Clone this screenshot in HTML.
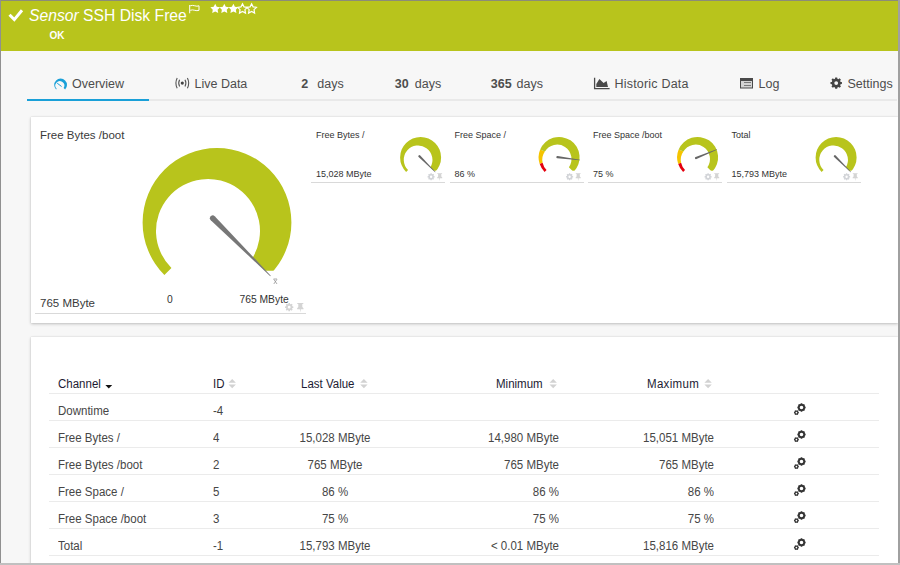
<!DOCTYPE html><html><head><meta charset="utf-8"><style>
*{margin:0;padding:0;box-sizing:border-box}
html,body{width:900px;height:565px;overflow:hidden}
body{font-family:"Liberation Sans",sans-serif;background:#f7f7f7;position:relative;color:#4a4a4a}
.a{position:absolute;white-space:nowrap;line-height:1}
#hdr{position:absolute;left:1px;top:1px;width:897px;height:50px;background:#b8c41c}
.title{color:#fff;font-size:15.7px}
.ok{color:#fff;font-size:10px;font-weight:bold}
.tab{font-size:12.5px;color:#4d4d4d}
.panel{position:absolute;background:#fff;box-shadow:0 1px 3px rgba(0,0,0,0.22),0 0 1px rgba(0,0,0,0.14)}
.gt{font-size:11.5px;color:#3a3a3a}
.st{font-size:9px;color:#333}
.ln{position:absolute;height:1px;background:#d9d9d9}
.th{font-size:12.5px;color:#1c1b33;transform:scaleX(0.92);transform-origin:0 0}
.td{font-size:12.5px;color:#464646;transform:scaleX(0.92);transform-origin:0 0}
.rl{position:absolute;left:49px;width:830px;height:1px;background:#ebebeb}
svg.full{position:absolute;left:0;top:0}
</style></head><body>
<div id="hdr"></div>
<div class="a title" style="left:29px;top:8px"><i>Sensor</i> SSH Disk Free</div>
<div class="a ok" style="left:49.5px;top:30.5px">OK</div>
<div class="a tab" style="left:72px;top:78px">Overview</div>
<div class="a tab" style="left:194.5px;top:78px">Live Data</div>
<div class="a tab" style="left:301.2px;top:78px"><b>2</b></div>
<div class="a tab" style="left:317.3px;top:78px">days</div>
<div class="a tab" style="left:394.8px;top:78px"><b>30</b></div>
<div class="a tab" style="left:414.8px;top:78px">days</div>
<div class="a tab" style="left:490.8px;top:78px"><b>365</b></div>
<div class="a tab" style="left:516.6px;top:78px">days</div>
<div class="a tab" style="left:614.5px;top:78px"><span style="letter-spacing:0.2px">Historic Data</span></div>
<div class="a tab" style="left:758.5px;top:78px">Log</div>
<div class="a tab" style="left:847.5px;top:78px">Settings</div>
<div style="position:absolute;left:27px;top:99px;width:870px;height:2px;background:#e9e9e9"></div>
<div style="position:absolute;left:27px;top:99px;width:122px;height:2px;background:#1aa0d8"></div>
<div class="panel" style="left:31px;top:117px;width:867px;height:206px"></div>
<div class="panel" style="left:31px;top:337px;width:867px;height:240px"></div>
<div class="a gt" style="left:40px;top:130px">Free Bytes /boot</div>
<div class="a gt" style="left:40px;top:298px">765 MByte</div>
<div class="ln" style="left:35px;top:313px;width:271px"></div>
<div class="a" style="left:167px;top:294.5px;font-size:10.3px;color:#333">0</div>
<div class="a" style="left:239.5px;top:294.5px;font-size:10.3px;color:#333">765 MByte</div>
<div class="a st" style="left:316.0px;top:131px">Free Bytes /</div>
<div class="a st" style="left:316.0px;top:169.5px">15,028 MByte</div>
<div class="ln" style="left:311.0px;top:182px;width:134px"></div>
<div class="a st" style="left:454.5px;top:131px">Free Space /</div>
<div class="a st" style="left:454.5px;top:169.5px">86 %</div>
<div class="ln" style="left:449.5px;top:182px;width:134px"></div>
<div class="a st" style="left:593.0px;top:131px">Free Space /boot</div>
<div class="a st" style="left:593.0px;top:169.5px">75 %</div>
<div class="ln" style="left:588.0px;top:182px;width:134px"></div>
<div class="a st" style="left:731.5px;top:131px">Total</div>
<div class="a st" style="left:731.5px;top:169.5px">15,793 MByte</div>
<div class="ln" style="left:726.5px;top:182px;width:134px"></div>
<div class="a th" style="left:58px;top:378px">Channel</div>
<div class="a th" style="left:213px;top:378px">ID</div>
<div class="a th" style="left:301px;top:378px">Last Value</div>
<div class="a th" style="left:495.5px;top:378px">Minimum</div>
<div class="a th" style="left:647px;top:378px"><span style="letter-spacing:0.35px">Maximum</span></div>
<div class="rl" style="top:393px"></div>
<div class="rl" style="top:420px"></div>
<div class="rl" style="top:447px"></div>
<div class="rl" style="top:474px"></div>
<div class="rl" style="top:501px"></div>
<div class="rl" style="top:528px"></div>
<div class="rl" style="top:555px"></div>
<div class="a td" style="left:58px;top:405px">Downtime</div>
<div class="a td" style="left:213px;top:405px">-4</div>
<div class="a td" style="left:58px;top:432px">Free Bytes /</div>
<div class="a td" style="left:213px;top:432px">4</div>
<div class="a td" style="left:235.3px;width:200px;text-align:center;transform-origin:50% 0;top:432px">15,028 MByte</div>
<div class="a td" style="left:358.8px;width:200px;text-align:right;transform-origin:100% 0;top:432px">14,980 MByte</div>
<div class="a td" style="left:514.3px;width:200px;text-align:right;transform-origin:100% 0;top:432px">15,051 MByte</div>
<div class="a td" style="left:58px;top:459px">Free Bytes /boot</div>
<div class="a td" style="left:213px;top:459px">2</div>
<div class="a td" style="left:235.3px;width:200px;text-align:center;transform-origin:50% 0;top:459px">765 MByte</div>
<div class="a td" style="left:358.8px;width:200px;text-align:right;transform-origin:100% 0;top:459px">765 MByte</div>
<div class="a td" style="left:514.3px;width:200px;text-align:right;transform-origin:100% 0;top:459px">765 MByte</div>
<div class="a td" style="left:58px;top:486px">Free Space /</div>
<div class="a td" style="left:213px;top:486px">5</div>
<div class="a td" style="left:235.3px;width:200px;text-align:center;transform-origin:50% 0;top:486px">86 %</div>
<div class="a td" style="left:358.8px;width:200px;text-align:right;transform-origin:100% 0;top:486px">86 %</div>
<div class="a td" style="left:514.3px;width:200px;text-align:right;transform-origin:100% 0;top:486px">86 %</div>
<div class="a td" style="left:58px;top:513px">Free Space /boot</div>
<div class="a td" style="left:213px;top:513px">3</div>
<div class="a td" style="left:235.3px;width:200px;text-align:center;transform-origin:50% 0;top:513px">75 %</div>
<div class="a td" style="left:358.8px;width:200px;text-align:right;transform-origin:100% 0;top:513px">75 %</div>
<div class="a td" style="left:514.3px;width:200px;text-align:right;transform-origin:100% 0;top:513px">75 %</div>
<div class="a td" style="left:58px;top:540px">Total</div>
<div class="a td" style="left:213px;top:540px">-1</div>
<div class="a td" style="left:235.3px;width:200px;text-align:center;transform-origin:50% 0;top:540px">15,793 MByte</div>
<div class="a td" style="left:358.8px;width:200px;text-align:right;transform-origin:100% 0;top:540px">< 0.01 MByte</div>
<div class="a td" style="left:514.3px;width:200px;text-align:right;transform-origin:100% 0;top:540px">15,816 MByte</div>
<svg class="full" width="900" height="565" viewBox="0 0 900 565">
<path d="M9.5 14.8 L14.3 19.6 L22 10.3" stroke="#fff" stroke-width="3" fill="none" stroke-linecap="butt"/>
<path d="M189.7 5 V13.3" stroke="#fff" stroke-width="1"/>
<path d="M190.2 5.8 Q192.5 5 194.8 5.8 Q197 6.6 199 5.8 V10.3 Q197 11.1 194.8 10.3 Q192.5 9.5 190.2 10.3" fill="none" stroke="#fff" stroke-width="1"/>
<path d="M215.20 3.80 L216.70 6.84 L220.05 7.32 L217.63 9.69 L218.20 13.03 L215.20 11.45 L212.20 13.03 L212.77 9.69 L210.35 7.32 L213.70 6.84 Z" fill="#fff"/>
<path d="M224.30 3.80 L225.80 6.84 L229.15 7.32 L226.73 9.69 L227.30 13.03 L224.30 11.45 L221.30 13.03 L221.87 9.69 L219.45 7.32 L222.80 6.84 Z" fill="#fff"/>
<path d="M233.40 3.80 L234.90 6.84 L238.25 7.32 L235.83 9.69 L236.40 13.03 L233.40 11.45 L230.40 13.03 L230.97 9.69 L228.55 7.32 L231.90 6.84 Z" fill="#fff"/>
<path d="M242.50 3.80 L244.00 6.84 L247.35 7.32 L244.93 9.69 L245.50 13.03 L242.50 11.45 L239.50 13.03 L240.07 9.69 L237.65 7.32 L241.00 6.84 Z" fill="none" stroke="#fff" stroke-width="1.2"/>
<path d="M251.60 3.80 L253.10 6.84 L256.45 7.32 L254.03 9.69 L254.60 13.03 L251.60 11.45 L248.60 13.03 L249.17 9.69 L246.75 7.32 L250.10 6.84 Z" fill="none" stroke="#fff" stroke-width="1.2"/>
<g transform="translate(60.6 84.9) scale(0.086)"><path d="M-52.61 52.61 A74.4 74.4 0 1 1 52.61 52.61 L35.50 35.50 A52.0 52.0 0 1 0 -45.57 45.57 Z" fill="#1aa0d8"/></g>
<path d="M57.2 83.2 L61.6 86.5" stroke="#1aa0d8" stroke-width="1"/>
<circle cx="182.3" cy="83.1" r="1.6" fill="#444"/>
<path d="M179.6 79.8 Q177.8 83.1 179.6 86.4 M185 79.8 Q186.8 83.1 185 86.4" stroke="#555" stroke-width="1.1" fill="none"/>
<path d="M177.2 78 Q174.6 83.1 177.2 88.2 M187.4 78 Q190 83.1 187.4 88.2" stroke="#555" stroke-width="1.1" fill="none"/>
<path d="M594.6 77.8 V88.6 H609.6" stroke="#4a4a4a" stroke-width="1.3" fill="none"/>
<path d="M596.3 86.9 L596.3 84 L599.4 79.1 L603.6 83 L606.6 80.9 L608 86.9 Z" fill="#4a4a4a"/>
<rect x="740" y="78" width="13" height="10.5" fill="#4a4a4a"/>
<rect x="741" y="81" width="11" height="6.5" fill="#d4d4d4"/>
<path d="M744 82.5 H751 M744 85.5 H751" stroke="#7a7a7a" stroke-width="1"/>
<path d="M840.56 81.89 L841.91 82.10 L841.91 84.10 L840.56 84.31 L840.14 85.33 L840.95 86.44 L839.54 87.85 L838.43 87.04 L837.41 87.46 L837.20 88.81 L835.20 88.81 L834.99 87.46 L833.97 87.04 L832.86 87.85 L831.45 86.44 L832.26 85.33 L831.84 84.31 L830.49 84.10 L830.49 82.10 L831.84 81.89 L832.26 80.87 L831.45 79.76 L832.86 78.35 L833.97 79.16 L834.99 78.74 L835.20 77.39 L837.20 77.39 L837.41 78.74 L838.43 79.16 L839.54 78.35 L840.95 79.76 L840.14 80.87 Z M834.30 83.10 a1.90 1.90 0 1 0 3.80 0 a1.90 1.90 0 1 0 -3.80 0 Z" fill="#444" fill-rule="evenodd"/>
<g transform="translate(217.00 222.40) scale(1.0000)"><path d="M-52.61 52.61 A74.4 74.4 0 1 1 52.61 52.61 L35.50 35.50 A52.0 52.0 0 1 0 -45.57 45.57 Z" fill="#b8c41c"/><path d="M0 48.3 H80 V55 H0 Z" fill="#fff"/><path d="M-6.22 -2.26 L53.28 53.78 L53.78 53.28 L-2.26 -6.22 A2.80 2.80 0 0 0 -6.22 -2.26 Z" fill="#777"/></g>
<path d="M273.5 279 H277 M273.8 279.3 L277 284 M277 279.3 L273.8 284" stroke="#888" stroke-width="0.7" fill="none"/>
<path d="M292.36 306.33 L293.34 306.48 L293.34 307.92 L292.36 308.07 L292.05 308.81 L292.64 309.62 L291.62 310.64 L290.81 310.05 L290.07 310.36 L289.92 311.34 L288.48 311.34 L288.33 310.36 L287.59 310.05 L286.78 310.64 L285.76 309.62 L286.35 308.81 L286.04 308.07 L285.06 307.92 L285.06 306.48 L286.04 306.33 L286.35 305.59 L285.76 304.78 L286.78 303.76 L287.59 304.35 L288.33 304.04 L288.48 303.06 L289.92 303.06 L290.07 304.04 L290.81 304.35 L291.62 303.76 L292.64 304.78 L292.05 305.59 Z M287.80 307.20 a1.40 1.40 0 1 0 2.80 0 a1.40 1.40 0 1 0 -2.80 0 Z" fill="#d4d4d4" fill-rule="evenodd"/>
<path d="M297.3 303.0 h6 v1 h-1 v3 l1.2 1.3 v0.9 h-2.7 l-0.5 3.3 l-0.5 -3.3 h-2.7 v-0.9 l1.2 -1.3 v-3 h-1 Z" fill="#d4d4d4"/>
<g transform="translate(420.60 157.40) scale(0.2755)"><path d="M-52.61 52.61 A74.4 74.4 0 1 1 52.61 52.61 L35.50 35.50 A52.0 52.0 0 1 0 -45.57 45.57 Z" fill="#b8c41c"/><path d="M0 48.3 H80 V55 H0 Z" fill="#fff"/><path d="M-7.21 -1.27 L52.82 54.24 L54.24 52.82 L-1.27 -7.21 A4.20 4.20 0 0 0 -7.21 -1.27 Z" fill="#666"/></g>
<path d="M433.81 176.05 L434.65 176.18 L434.65 177.42 L433.81 177.55 L433.54 178.18 L434.05 178.87 L433.17 179.75 L432.48 179.24 L431.85 179.51 L431.72 180.35 L430.48 180.35 L430.35 179.51 L429.72 179.24 L429.03 179.75 L428.15 178.87 L428.66 178.18 L428.39 177.55 L427.55 177.42 L427.55 176.18 L428.39 176.05 L428.66 175.42 L428.15 174.73 L429.03 173.85 L429.72 174.36 L430.35 174.09 L430.48 173.25 L431.72 173.25 L431.85 174.09 L432.48 174.36 L433.17 173.85 L434.05 174.73 L433.54 175.42 Z M429.90 176.80 a1.20 1.20 0 1 0 2.40 0 a1.20 1.20 0 1 0 -2.40 0 Z" fill="#d2d4d8" fill-rule="evenodd"/>
<g transform="translate(437.3 173.3) scale(0.8)"><path d="M0.0 0.0 h6 v1 h-1 v3 l1.2 1.3 v0.9 h-2.7 l-0.5 3.3 l-0.5 -3.3 h-2.7 v-0.9 l1.2 -1.3 v-3 h-1 Z" fill="#d4d4d4"/></g>
<g transform="translate(559.10 157.40) scale(0.2755)"><path d="M-52.61 52.61 A74.4 74.4 0 0 1 -70.76 22.99 L-59.86 19.45 A52.0 52.0 0 0 0 -45.57 45.57 Z" fill="#e4000f"/><path d="M-70.76 22.99 A74.4 74.4 0 0 1 -68.74 -28.47 L-51.52 -21.34 A52.0 52.0 0 0 0 -59.86 19.45 Z" fill="#f5c400"/><path d="M-68.74 -28.47 A74.4 74.4 0 1 1 52.61 52.61 L35.50 35.50 A52.0 52.0 0 1 0 -51.52 -21.34 Z" fill="#b8c41c"/><path d="M0 48.3 H80 V55 H0 Z" fill="#fff"/><path d="M-6.48 3.41 L74.98 10.48 L75.23 8.50 L-5.43 -4.92 A4.20 4.20 0 0 0 -6.48 3.41 Z" fill="#666"/></g>
<path d="M572.31 176.05 L573.15 176.18 L573.15 177.42 L572.31 177.55 L572.04 178.18 L572.55 178.87 L571.67 179.75 L570.98 179.24 L570.35 179.51 L570.22 180.35 L568.98 180.35 L568.85 179.51 L568.22 179.24 L567.53 179.75 L566.65 178.87 L567.16 178.18 L566.89 177.55 L566.05 177.42 L566.05 176.18 L566.89 176.05 L567.16 175.42 L566.65 174.73 L567.53 173.85 L568.22 174.36 L568.85 174.09 L568.98 173.25 L570.22 173.25 L570.35 174.09 L570.98 174.36 L571.67 173.85 L572.55 174.73 L572.04 175.42 Z M568.40 176.80 a1.20 1.20 0 1 0 2.40 0 a1.20 1.20 0 1 0 -2.40 0 Z" fill="#d2d4d8" fill-rule="evenodd"/>
<g transform="translate(575.8 173.3) scale(0.8)"><path d="M0.0 0.0 h6 v1 h-1 v3 l1.2 1.3 v0.9 h-2.7 l-0.5 3.3 l-0.5 -3.3 h-2.7 v-0.9 l1.2 -1.3 v-3 h-1 Z" fill="#d4d4d4"/></g>
<g transform="translate(697.60 157.40) scale(0.2755)"><path d="M-52.61 52.61 A74.4 74.4 0 0 1 -70.76 22.99 L-59.86 19.45 A52.0 52.0 0 0 0 -45.57 45.57 Z" fill="#e4000f"/><path d="M-70.76 22.99 A74.4 74.4 0 0 1 -68.74 -28.47 L-51.52 -21.34 A52.0 52.0 0 0 0 -59.86 19.45 Z" fill="#f5c400"/><path d="M-68.74 -28.47 A74.4 74.4 0 1 1 52.61 52.61 L35.50 35.50 A52.0 52.0 0 1 0 -51.52 -21.34 Z" fill="#b8c41c"/><path d="M0 48.3 H80 V55 H0 Z" fill="#fff"/><path d="M-3.94 6.18 L70.32 -28.05 L69.55 -29.89 L-7.15 -1.58 A4.20 4.20 0 0 0 -3.94 6.18 Z" fill="#666"/></g>
<path d="M710.81 176.05 L711.65 176.18 L711.65 177.42 L710.81 177.55 L710.54 178.18 L711.05 178.87 L710.17 179.75 L709.48 179.24 L708.85 179.51 L708.72 180.35 L707.48 180.35 L707.35 179.51 L706.72 179.24 L706.03 179.75 L705.15 178.87 L705.66 178.18 L705.39 177.55 L704.55 177.42 L704.55 176.18 L705.39 176.05 L705.66 175.42 L705.15 174.73 L706.03 173.85 L706.72 174.36 L707.35 174.09 L707.48 173.25 L708.72 173.25 L708.85 174.09 L709.48 174.36 L710.17 173.85 L711.05 174.73 L710.54 175.42 Z M706.90 176.80 a1.20 1.20 0 1 0 2.40 0 a1.20 1.20 0 1 0 -2.40 0 Z" fill="#d2d4d8" fill-rule="evenodd"/>
<g transform="translate(714.3 173.3) scale(0.8)"><path d="M0.0 0.0 h6 v1 h-1 v3 l1.2 1.3 v0.9 h-2.7 l-0.5 3.3 l-0.5 -3.3 h-2.7 v-0.9 l1.2 -1.3 v-3 h-1 Z" fill="#d4d4d4"/></g>
<g transform="translate(836.10 157.40) scale(0.2755)"><path d="M-52.61 52.61 A74.4 74.4 0 1 1 52.61 52.61 L35.50 35.50 A52.0 52.0 0 1 0 -45.57 45.57 Z" fill="#b8c41c"/><path d="M0 48.3 H80 V55 H0 Z" fill="#fff"/><path d="M-7.21 -1.27 L52.82 54.24 L54.24 52.82 L-1.27 -7.21 A4.20 4.20 0 0 0 -7.21 -1.27 Z" fill="#666"/></g>
<path d="M849.31 176.05 L850.15 176.18 L850.15 177.42 L849.31 177.55 L849.04 178.18 L849.55 178.87 L848.67 179.75 L847.98 179.24 L847.35 179.51 L847.22 180.35 L845.98 180.35 L845.85 179.51 L845.22 179.24 L844.53 179.75 L843.65 178.87 L844.16 178.18 L843.89 177.55 L843.05 177.42 L843.05 176.18 L843.89 176.05 L844.16 175.42 L843.65 174.73 L844.53 173.85 L845.22 174.36 L845.85 174.09 L845.98 173.25 L847.22 173.25 L847.35 174.09 L847.98 174.36 L848.67 173.85 L849.55 174.73 L849.04 175.42 Z M845.40 176.80 a1.20 1.20 0 1 0 2.40 0 a1.20 1.20 0 1 0 -2.40 0 Z" fill="#d2d4d8" fill-rule="evenodd"/>
<g transform="translate(852.8 173.3) scale(0.8)"><path d="M0.0 0.0 h6 v1 h-1 v3 l1.2 1.3 v0.9 h-2.7 l-0.5 3.3 l-0.5 -3.3 h-2.7 v-0.9 l1.2 -1.3 v-3 h-1 Z" fill="#d4d4d4"/></g>
<path d="M105.4 385 H112.2 L108.8 388.6 Z" fill="#111"/>
<path d="M228.5 382.8 L232.2 379.1 L235.9 382.8 Z M228.5 384.5 L232.2 388.3 L235.9 384.5 Z" fill="#d2d2d2"/>
<path d="M360.2 382.8 L363.9 379.1 L367.6 382.8 Z M360.2 384.5 L363.9 388.3 L367.6 384.5 Z" fill="#d2d2d2"/>
<path d="M549.5 382.8 L553.2 379.1 L556.9 382.8 Z M549.5 384.5 L553.2 388.3 L556.9 384.5 Z" fill="#d2d2d2"/>
<path d="M704.4 382.8 L708.1 379.1 L711.8 382.8 Z M704.4 384.5 L708.1 388.3 L711.8 384.5 Z" fill="#d2d2d2"/>
<path d="M805.06 406.51 L805.64 406.78 L805.64 408.22 L805.06 408.49 L804.72 409.32 L804.94 409.92 L803.92 410.94 L803.32 410.72 L802.49 411.06 L802.22 411.64 L800.78 411.64 L800.51 411.06 L799.68 410.72 L799.08 410.94 L798.06 409.92 L798.28 409.32 L797.94 408.49 L797.36 408.22 L797.36 406.78 L797.94 406.51 L798.28 405.68 L798.06 405.08 L799.08 404.06 L799.68 404.28 L800.51 403.94 L800.78 403.36 L802.22 403.36 L802.49 403.94 L803.32 404.28 L803.92 404.06 L804.94 405.08 L804.72 405.68 Z M799.70 407.50 a1.80 1.80 0 1 0 3.60 0 a1.80 1.80 0 1 0 -3.60 0 Z" fill="#333" fill-rule="evenodd"/>
<path d="M798.39 411.85 L798.83 412.03 L798.83 413.17 L798.39 413.35 L798.04 413.95 L798.11 414.42 L797.12 414.99 L796.75 414.70 L796.05 414.70 L795.68 414.99 L794.69 414.42 L794.76 413.95 L794.41 413.35 L793.97 413.17 L793.97 412.03 L794.41 411.85 L794.76 411.25 L794.69 410.78 L795.68 410.21 L796.05 410.50 L796.75 410.50 L797.12 410.21 L798.11 410.78 L798.04 411.25 Z M795.55 412.60 a0.85 0.85 0 1 0 1.70 0 a0.85 0.85 0 1 0 -1.70 0 Z" fill="#333" fill-rule="evenodd"/>
<path d="M805.06 433.51 L805.64 433.78 L805.64 435.22 L805.06 435.49 L804.72 436.32 L804.94 436.92 L803.92 437.94 L803.32 437.72 L802.49 438.06 L802.22 438.64 L800.78 438.64 L800.51 438.06 L799.68 437.72 L799.08 437.94 L798.06 436.92 L798.28 436.32 L797.94 435.49 L797.36 435.22 L797.36 433.78 L797.94 433.51 L798.28 432.68 L798.06 432.08 L799.08 431.06 L799.68 431.28 L800.51 430.94 L800.78 430.36 L802.22 430.36 L802.49 430.94 L803.32 431.28 L803.92 431.06 L804.94 432.08 L804.72 432.68 Z M799.70 434.50 a1.80 1.80 0 1 0 3.60 0 a1.80 1.80 0 1 0 -3.60 0 Z" fill="#333" fill-rule="evenodd"/>
<path d="M798.39 438.85 L798.83 439.03 L798.83 440.17 L798.39 440.35 L798.04 440.95 L798.11 441.42 L797.12 441.99 L796.75 441.70 L796.05 441.70 L795.68 441.99 L794.69 441.42 L794.76 440.95 L794.41 440.35 L793.97 440.17 L793.97 439.03 L794.41 438.85 L794.76 438.25 L794.69 437.78 L795.68 437.21 L796.05 437.50 L796.75 437.50 L797.12 437.21 L798.11 437.78 L798.04 438.25 Z M795.55 439.60 a0.85 0.85 0 1 0 1.70 0 a0.85 0.85 0 1 0 -1.70 0 Z" fill="#333" fill-rule="evenodd"/>
<path d="M805.06 460.51 L805.64 460.78 L805.64 462.22 L805.06 462.49 L804.72 463.32 L804.94 463.92 L803.92 464.94 L803.32 464.72 L802.49 465.06 L802.22 465.64 L800.78 465.64 L800.51 465.06 L799.68 464.72 L799.08 464.94 L798.06 463.92 L798.28 463.32 L797.94 462.49 L797.36 462.22 L797.36 460.78 L797.94 460.51 L798.28 459.68 L798.06 459.08 L799.08 458.06 L799.68 458.28 L800.51 457.94 L800.78 457.36 L802.22 457.36 L802.49 457.94 L803.32 458.28 L803.92 458.06 L804.94 459.08 L804.72 459.68 Z M799.70 461.50 a1.80 1.80 0 1 0 3.60 0 a1.80 1.80 0 1 0 -3.60 0 Z" fill="#333" fill-rule="evenodd"/>
<path d="M798.39 465.85 L798.83 466.03 L798.83 467.17 L798.39 467.35 L798.04 467.95 L798.11 468.42 L797.12 468.99 L796.75 468.70 L796.05 468.70 L795.68 468.99 L794.69 468.42 L794.76 467.95 L794.41 467.35 L793.97 467.17 L793.97 466.03 L794.41 465.85 L794.76 465.25 L794.69 464.78 L795.68 464.21 L796.05 464.50 L796.75 464.50 L797.12 464.21 L798.11 464.78 L798.04 465.25 Z M795.55 466.60 a0.85 0.85 0 1 0 1.70 0 a0.85 0.85 0 1 0 -1.70 0 Z" fill="#333" fill-rule="evenodd"/>
<path d="M805.06 487.51 L805.64 487.78 L805.64 489.22 L805.06 489.49 L804.72 490.32 L804.94 490.92 L803.92 491.94 L803.32 491.72 L802.49 492.06 L802.22 492.64 L800.78 492.64 L800.51 492.06 L799.68 491.72 L799.08 491.94 L798.06 490.92 L798.28 490.32 L797.94 489.49 L797.36 489.22 L797.36 487.78 L797.94 487.51 L798.28 486.68 L798.06 486.08 L799.08 485.06 L799.68 485.28 L800.51 484.94 L800.78 484.36 L802.22 484.36 L802.49 484.94 L803.32 485.28 L803.92 485.06 L804.94 486.08 L804.72 486.68 Z M799.70 488.50 a1.80 1.80 0 1 0 3.60 0 a1.80 1.80 0 1 0 -3.60 0 Z" fill="#333" fill-rule="evenodd"/>
<path d="M798.39 492.85 L798.83 493.03 L798.83 494.17 L798.39 494.35 L798.04 494.95 L798.11 495.42 L797.12 495.99 L796.75 495.70 L796.05 495.70 L795.68 495.99 L794.69 495.42 L794.76 494.95 L794.41 494.35 L793.97 494.17 L793.97 493.03 L794.41 492.85 L794.76 492.25 L794.69 491.78 L795.68 491.21 L796.05 491.50 L796.75 491.50 L797.12 491.21 L798.11 491.78 L798.04 492.25 Z M795.55 493.60 a0.85 0.85 0 1 0 1.70 0 a0.85 0.85 0 1 0 -1.70 0 Z" fill="#333" fill-rule="evenodd"/>
<path d="M805.06 514.51 L805.64 514.78 L805.64 516.22 L805.06 516.49 L804.72 517.32 L804.94 517.92 L803.92 518.94 L803.32 518.72 L802.49 519.06 L802.22 519.64 L800.78 519.64 L800.51 519.06 L799.68 518.72 L799.08 518.94 L798.06 517.92 L798.28 517.32 L797.94 516.49 L797.36 516.22 L797.36 514.78 L797.94 514.51 L798.28 513.68 L798.06 513.08 L799.08 512.06 L799.68 512.28 L800.51 511.94 L800.78 511.36 L802.22 511.36 L802.49 511.94 L803.32 512.28 L803.92 512.06 L804.94 513.08 L804.72 513.68 Z M799.70 515.50 a1.80 1.80 0 1 0 3.60 0 a1.80 1.80 0 1 0 -3.60 0 Z" fill="#333" fill-rule="evenodd"/>
<path d="M798.39 519.85 L798.83 520.03 L798.83 521.17 L798.39 521.35 L798.04 521.95 L798.11 522.42 L797.12 522.99 L796.75 522.70 L796.05 522.70 L795.68 522.99 L794.69 522.42 L794.76 521.95 L794.41 521.35 L793.97 521.17 L793.97 520.03 L794.41 519.85 L794.76 519.25 L794.69 518.78 L795.68 518.21 L796.05 518.50 L796.75 518.50 L797.12 518.21 L798.11 518.78 L798.04 519.25 Z M795.55 520.60 a0.85 0.85 0 1 0 1.70 0 a0.85 0.85 0 1 0 -1.70 0 Z" fill="#333" fill-rule="evenodd"/>
<path d="M805.06 541.51 L805.64 541.78 L805.64 543.22 L805.06 543.49 L804.72 544.32 L804.94 544.92 L803.92 545.94 L803.32 545.72 L802.49 546.06 L802.22 546.64 L800.78 546.64 L800.51 546.06 L799.68 545.72 L799.08 545.94 L798.06 544.92 L798.28 544.32 L797.94 543.49 L797.36 543.22 L797.36 541.78 L797.94 541.51 L798.28 540.68 L798.06 540.08 L799.08 539.06 L799.68 539.28 L800.51 538.94 L800.78 538.36 L802.22 538.36 L802.49 538.94 L803.32 539.28 L803.92 539.06 L804.94 540.08 L804.72 540.68 Z M799.70 542.50 a1.80 1.80 0 1 0 3.60 0 a1.80 1.80 0 1 0 -3.60 0 Z" fill="#333" fill-rule="evenodd"/>
<path d="M798.39 546.85 L798.83 547.03 L798.83 548.17 L798.39 548.35 L798.04 548.95 L798.11 549.42 L797.12 549.99 L796.75 549.70 L796.05 549.70 L795.68 549.99 L794.69 549.42 L794.76 548.95 L794.41 548.35 L793.97 548.17 L793.97 547.03 L794.41 546.85 L794.76 546.25 L794.69 545.78 L795.68 545.21 L796.05 545.50 L796.75 545.50 L797.12 545.21 L798.11 545.78 L798.04 546.25 Z M795.55 547.60 a0.85 0.85 0 1 0 1.70 0 a0.85 0.85 0 1 0 -1.70 0 Z" fill="#333" fill-rule="evenodd"/>
</svg>
<div style="position:absolute;left:0;top:0;width:900px;height:1px;background:#8c8c78"></div>
<div style="position:absolute;left:0;top:0;width:1px;height:565px;background:#909090"></div>
<div style="position:absolute;left:898px;top:0;width:2px;height:565px;background:#a0a0a0"></div>
<div style="position:absolute;left:0;top:563px;width:900px;height:2px;background:#c0c0c0"></div>
</body></html>
